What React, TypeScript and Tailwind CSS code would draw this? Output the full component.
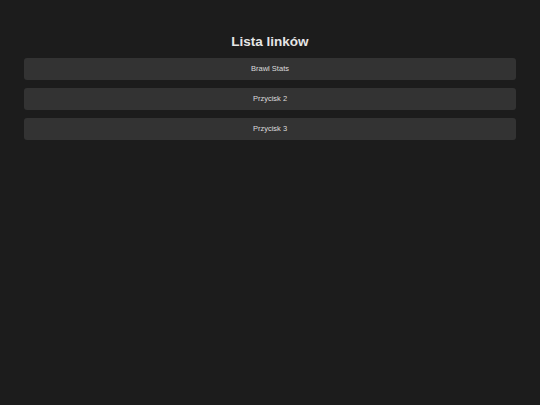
const links = ['Brawl Stats', 'Przycisk 2', 'Przycisk 3'];

export default function App() {
  return (
    <div
      className="min-h-[405px] w-full bg-[#1c1c1c] px-[24px] pt-[34px]"
      style={{ fontFamily: '"Liberation Sans", Arial, sans-serif' }}
    >
      <h1 className="mb-[8px] h-[16px] text-center text-[13.5px] font-bold leading-[16px] text-[#e6e6e6]">
        Lista linków
      </h1>
      <div className="flex flex-col gap-[8px]">
        {links.map((label) => (
          <button
            key={label}
            className="flex h-[22px] w-full items-center justify-center rounded-[3px] bg-[#333333] text-[7.5px] text-[#dcdcdc]"
          >
            {label}
          </button>
        ))}
      </div>
    </div>
  );
}
